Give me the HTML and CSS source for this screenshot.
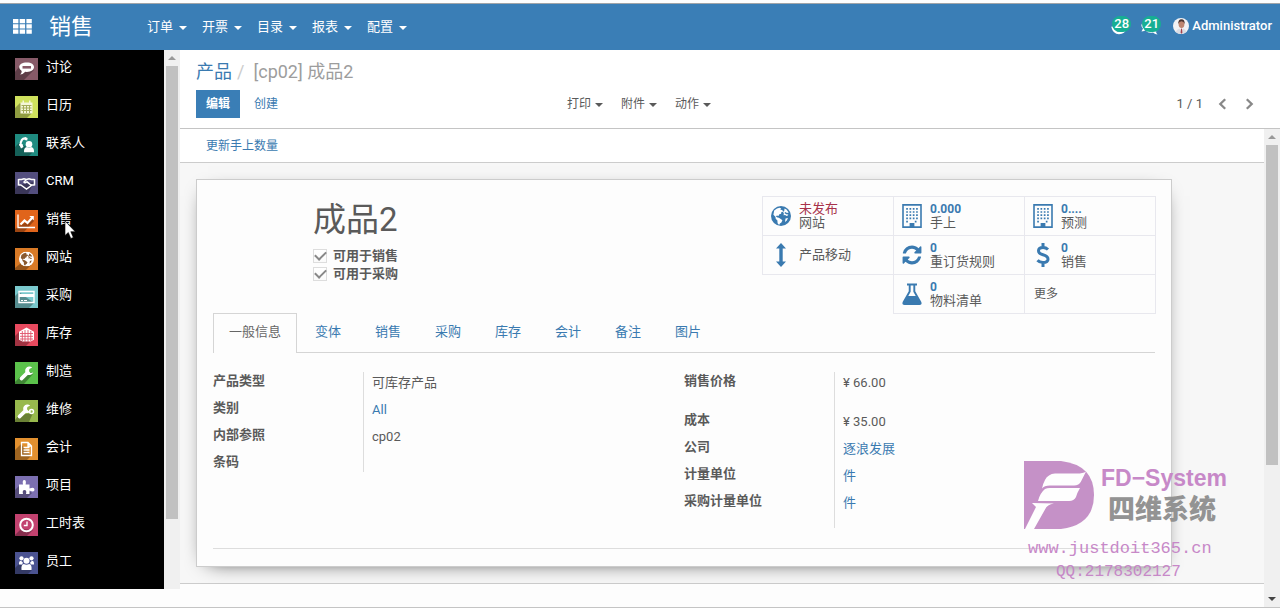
FILE: index.html
```html
<!DOCTYPE html>
<html lang="zh-CN">
<head>
<meta charset="utf-8">
<title>销售 - 成品2</title>
<link rel="stylesheet" href="styles.css">
</head>
<body>
<svg class="defs" aria-hidden="true">
  <defs>
    <symbol id="globe" viewBox="0 0 20 20">
      <circle cx="10" cy="10" r="10" fill="currentColor"/>
      <path class="cut" d="M3.2 4.6 6 2.500l2.600-.7 1.600.8-.9 1.200 1.900.3 1.100 1.600-1.900.4-.3 1.600-1.700.5-1 1.700-1.500-.3-1 .9 1.600.9 1.400.3 2.200 1.600 1.300.9-1 2.300-1.500 1-.8 1.600-1.500-1.900-.2-2.800-1.700-1.700-.3-1.900-2-2.100zM13.500 2.600l2 1 2.200 2.800-1.700.5-1.600-.9-1 1 1.900 1.200 2 .3-.5 1-1.200.6-1.500-1-1.600.2.400-1.500-.8-1.800 1.200-1.200zM14.500 12.500l2.500-.5-1.200 2.500-1.800 1.500z"/>
    </symbol>
    <symbol id="building" viewBox="0 0 20 24">
      <path fill="none" stroke="currentColor" stroke-width="1.6" d="M1 .9h18v22.2H1z"/>
      <path fill="none" stroke="currentColor" stroke-width="1.7" stroke-dasharray="1.7 1.6" d="M4.200 4.800h12.400M4.200 8h12.400M4.200 11.200h12.400M4.200 14.400h12.400M4.200 17.600h3M12.800 17.600h3"/>
      <path fill="currentColor" d="M7.600 19h4.800v4.600H7.600z"/>
    </symbol>
    <symbol id="wrench" viewBox="0 0 23 22">
      <path d="M6.400 16.600l6.400-6.200" fill="none" stroke="#fff" stroke-width="3.600" stroke-linecap="round"/>
      <path d="M17.200 5.400a4.300 4.300 0 1 0 1.100 5.200l-2.900.3-1.500-1.500.5-2.300z" fill="#fff"/>
    </symbol>
  </defs>
</svg>

<header class="navbar">
  <button class="apps" aria-label="应用">
    <svg width="19" height="15" viewBox="0 0 19 15"><path fill="#fff" d="M0 0h5.400v4.200H0zM6.700 0h5.400v4.200H6.700zM13.400 0h5.400v4.200h-5.400zM0 5.300h5.400v4.200H0zM6.700 5.300h5.400v4.200H6.700zM13.400 5.300h5.400v4.200h-5.400zM0 10.600h5.400v4.200H0zM6.700 10.600h5.400v4.200H6.700zM13.400 10.600h5.400v4.200h-5.400z"/></svg>
  </button>
  <a class="brand" href="#">销售</a>
  <nav class="menu">
    <button class="caret">订单</button>
    <button class="caret">开票</button>
    <button class="caret">目录</button>
    <button class="caret">报表</button>
    <button class="caret">配置</button>
  </nav>
  <div class="systray">
    <button class="tray" aria-label="活动">
      <svg width="18" height="18" viewBox="0 0 18 18"><path d="M1.500 9.500Q3 16 8 16T14.500 11" fill="none" stroke="#fff" stroke-width="2.600"/></svg>
      <span class="badge">28</span>
    </button>
    <button class="tray" aria-label="消息">
      <svg width="18" height="18" viewBox="0 0 18 18"><path fill="#fff" d="M1.500 6Q-1 9 2 11.500L.5 14.500Q3.500 14.500 5 12.800L8 13.500Q3 11 1.500 6zM5 14.500Q9 16.500 12 15.500 14 17.500 16.500 17.500 15 16 15 14.800L17 12 13 13z"/></svg>
      <span class="badge">21</span>
    </button>
    <button class="user">
      <svg width="16" height="16" viewBox="0 0 16 16"><circle cx="8" cy="8" r="8" fill="#f2f2f4"/><path d="M2.500 14Q4 11 6.500 10.500L8 13.500 10 10.500Q12.500 11 13.500 14 8 18 2.500 14z" fill="#d9dce4"/><ellipse cx="8.500" cy="6" rx="2.900" ry="4.100" fill="#bd8570"/><path d="M5.300 6Q5 1.300 8.500 1.200 12 1.300 11.600 6 11 3.500 8.500 3.300 6 3.500 5.300 6z" fill="#4a3531"/><path d="M8 10.500l1 .2.400 4-.9 1-.9-1z" fill="#a33f49"/></svg>
      <span>Administrator</span>
    </button>
  </div>
</header>

<div class="workspace">
  <aside class="side">
    <nav class="applist">
      <a class="app" href="#"><svg class="ic" style="background:#875a68" viewBox="0 0 23 22"><path class="sh" d="M4 9l15 3L9 22H0V14z"/><path fill="#fff" d="M11.800 4.500c4.500 0 7.200 2 7.200 4.600s-2.700 4.800-7.200 4.800l-1.500-.1Q8 16.500 5.200 16.600 6.800 15 6.700 13 4.200 11.500 4.200 9.200c0-2.800 3-4.700 7.600-4.700z"/><path d="M7.500 8h8.500v2.600H7.500z" fill="#875a68"/></svg><span>讨论</span></a>
      <a class="app" href="#"><svg class="ic" style="background:#cfe15d" viewBox="0 0 23 22"><path class="sh" d="M5 7l12 10-5 5H0V12z"/><path fill="#f4f6d8" d="M5.500 6.500h12v11h-12zM7.500 4.500h1.500v2H7.500zM14 4.500h1.500v2H14z"/><path d="M6.500 9.500h10M6.500 12h10M6.500 14.500h10M8.500 9v8M11.500 9v8M14.500 9v8" stroke="#a4ad5c"/></svg><span>日历</span></a>
      <a class="app" href="#"><svg class="ic" style="background:#1f8b80" viewBox="0 0 23 22"><path class="sh" d="M4 9l15 8-5 5H0V13z"/><path d="M11 4.500Q5.500 3.500 5.500 12" fill="none" stroke="#fff" stroke-width="2.200"/><path fill="#fff" d="M4 10h3.500l1 3-2.500 1.500zM10 3l2.600 1-.4 2.500L9.500 6z"/><circle cx="14" cy="10.200" r="3.300" fill="#fff"/><path d="M9 18.200q-.3-5 3-5.200 2 1.500 4 0 3.300.2 3 5.200z" fill="#fff"/></svg><span>联系人</span></a>
      <a class="app" href="#"><svg class="ic" style="background:#534e7e" viewBox="0 0 23 22"><path class="sh" d="M4 13l15-3-6 12H0V17z"/><path d="M3.500 7.500h3L9 6.800l2.500.6L14 6.800l2.500.7h3M3.500 13h2.300l5.700 4 5.600-4h2.400M3.500 7v6.500M19.500 7v6.500M11.500 7.500L9 10q1 1.500 3-.2l4.500 3.700" fill="none" stroke="#fff" stroke-width="1.500"/></svg><span>CRM</span></a>
      <a class="app" href="#"><svg class="ic" style="background:#e0641b" viewBox="0 0 23 22"><path class="sh" d="M6 15l13-7v3L9 22H0v-3z"/><path d="M3 4.500v13h17" fill="none" stroke="#fff" stroke-width="1.300"/><path d="M5.500 14.500l4-4 3 2.500 4.500-5" fill="none" stroke="#fff" stroke-width="2.200"/><path d="M14.300 6h4.500v4.500z" fill="#fff"/></svg><span>销售</span></a>
      <a class="app site" href="#"><svg class="ic" style="background:#d97a26" viewBox="0 0 23 22"><path class="sh" d="M6 15l11 1-6 6H0v-2z"/><svg x="4" y="3.500" width="15" height="15" color="#fff"><use href="#globe"/></svg></svg><span>网站</span></a>
      <a class="app" href="#"><svg class="ic" style="background:#7ac9cd" viewBox="0 0 23 22"><path class="sh" d="M4 6l15 11-5 5H0V10z"/><path d="M4 5.500h15v11H4z" fill="none" stroke="#fff" stroke-width="1.400"/><path d="M4 8h15v3H4z" fill="#fff"/><path d="M6 14.500h2M9 14.500h3" stroke="#fff"/></svg><span>采购</span></a>
      <a class="app" href="#"><svg class="ic" style="background:#e84a5f" viewBox="0 0 23 22"><path class="sh" d="M4 8l11 10-4 4H0V12z"/><path d="M11.500 3.500L19 7.800v8l-3.500 1.700h-8L4 15.800v-8z" fill="#fff"/><path d="M7.300 7v10M10 6v12M13 6v12M15.800 7v10M5 9.500h13M5 12.300h13M5 15h13" stroke="#e0526a" stroke-width=".9"/></svg><span>库存</span></a>
      <a class="app" href="#"><svg class="ic" style="background:#5bc24b" viewBox="0 0 23 22"><path class="sh" d="M5 15l12-5 1 2-9 10H0v-2z"/><use href="#wrench"/></svg><span>制造</span></a>
      <a class="app" href="#"><svg class="ic" style="background:#98b94d" viewBox="0 0 23 22"><path class="sh" d="M4 15l14-2-4 9H0v-2z"/><svg x="-2" y="0" width="23" height="22"><use href="#wrench"/></svg><circle cx="16.500" cy="11.500" r="2" fill="none" stroke="#fff" stroke-width="1.500"/></svg><span>维修</span></a>
      <a class="app" href="#"><svg class="ic" style="background:#e2902f" viewBox="0 0 23 22"><path class="sh" d="M6 6l10 12-4 4H0V12z"/><path d="M6.500 4.500h6.500l3.500 3.500v9.500h-10zM13 4.500V8h3.500M8.500 9.500h6M8.500 12h6M8.500 14.500h6" fill="none" stroke="#fff" stroke-width="1.300"/></svg><span>会计</span></a>
      <a class="app" href="#"><svg class="ic" style="background:#7b6fb0" viewBox="0 0 23 22"><path class="sh" d="M5 9l12 8-5 5H0v-8z"/><path fill="#fff" d="M4 8.500h4Q7 4 9.300 4T10.600 8.500H14.500v4Q19.500 10.500 19.500 13.700T14.500 14.500V18H11q1-4-1.500-4T8 18H4z"/></svg><span>项目</span></a>
      <a class="app" href="#"><svg class="ic" style="background:#c2426f" viewBox="0 0 23 22"><path class="sh" d="M6 15l12 1-6 6H0v-1z"/><circle cx="11.500" cy="11" r="6.300" fill="none" stroke="#fff" stroke-width="2"/><path d="M12 7.500v4H8.800" fill="none" stroke="#fff" stroke-width="1.400"/></svg><span>工时表</span></a>
      <a class="app" href="#"><svg class="ic" style="background:#4b5391" viewBox="0 0 23 22"><path class="sh" d="M4 12l13 6-4 4H0v-6z"/><g fill="#fff"><circle cx="6.500" cy="6.300" r="2.100"/><circle cx="16.500" cy="6.300" r="2.100"/><circle cx="11.500" cy="8.700" r="3"/><path d="M4 12.500q-.3-3.500 2-3.700l2 2-1 1.700zM19 12.500q.3-3.500-2-3.700l-2 2 1 1.700zM6.500 18q-.6-5.500 2.300-6 2.700 1.500 5.400 0 2.900.5 2.300 6z"/></g></svg><span>员工</span></a>
    </nav>
    <div class="bar side-bar"><i class="up"></i><i class="thumb side-thumb"></i></div>
    <svg class="cursor" width="13" height="20" viewBox="0 0 13 20"><path d="M1 1v14.500l3.300-3 2.500 6 2.500-1.100-2.500-5.700h4.500z" fill="#fff" stroke="#000" stroke-width=".6"/></svg>
  </aside>

  <main class="main">
    <section class="control">
      <div class="crumbs"><a href="#">产品</a><span class="sep">/</span><span>[cp02] 成品2</span></div>
      <div class="actions">
        <div class="left"><button class="primary">编辑</button><button class="link">创建</button></div>
        <div class="mid"><button class="caret">打印</button><button class="caret">附件</button><button class="caret">动作</button></div>
        <div class="pager"><span>1 / 1</span>
          <button aria-label="上一个"><svg width="9" height="12" viewBox="0 0 9 12"><path d="M7.200 1.200L2.300 6l4.900 4.800" fill="none" stroke="#888" stroke-width="2.300"/></svg></button>
          <button aria-label="下一个"><svg width="9" height="12" viewBox="0 0 9 12"><path d="M1.800 1.200L6.700 6l-4.900 4.800" fill="none" stroke="#888" stroke-width="2.300"/></svg></button>
        </div>
      </div>
    </section>
    <div class="view">
      <div class="form">
        <div class="status"><button class="link">更新手上数量</button></div>
        <div class="sheet-bg">
          <article class="sheet">
            <div class="top">
              <div class="title">
                <h1>成品2</h1>
                <label class="check"><input type="checkbox" checked><span>可用于销售</span></label>
                <label class="check"><input type="checkbox" checked><span>可用于采购</span></label>
              </div>
              <div class="stats">
                <button class="stat"><svg class="si" viewBox="0 0 22 24"><svg x="1" y="2" width="20" height="20"><use href="#globe"/></svg></svg><span class="st"><em class="red">未发布</em><span>网站</span></span></button>
                <button class="stat"><svg class="si" viewBox="0 0 22 24"><svg x="1" y="0" width="20" height="24"><use href="#building"/></svg></svg><span class="st"><b>0.000</b><span>手上</span></span></button>
                <button class="stat"><svg class="si" viewBox="0 0 22 24"><svg x="1" y="0" width="20" height="24"><use href="#building"/></svg></svg><span class="st"><b>0....</b><span>预测</span></span></button>
                <button class="stat"><svg class="si" viewBox="0 0 22 24"><path fill="currentColor" d="M11 0l5 5.500h-3.300v13H16L11 24l-5-5.500h3.300v-13H6z"/></svg><span class="st"><span>产品移动</span></span></button>
                <button class="stat"><svg class="si" viewBox="0 0 1792 1792"><path fill="currentColor" d="M1639 1056q0 5-1 7-64 268-268 434.500t-478 166.500q-146 0-282.500-55t-243.500-157l-129 129q-19 19-45 19t-45-19-19-45v-448q0-26 19-45t45-19h448q26 0 45 19t19 45-19 45l-137 137q71 66 161 102t187 36q134 0 250-65t186-179q11-17 53-117 8-23 30-23h192q13 0 22.500 9.500t9.500 22.500zm25-800v448q0 26-19 45t-45 19h-448q-26 0-45-19t-19-45 19-45l138-138q-148-137-349-137-134 0-250 65t-186 179q-11 17-53 117-8 23-30 23h-199q-13 0-22.500-9.500t-9.500-22.500v-7q65-268 270-434.500t480-166.500q146 0 284 55.500t245 156.500l130-129q19-19 45-19t45 19 19 45z"/></svg><span class="st"><b>0</b><span>重订货规则</span></span></button>
                <button class="stat"><svg class="si" viewBox="0 0 22 24"><path fill="none" stroke="currentColor" stroke-width="3" d="M16 6.500Q14 4.500 11 4.500 6.500 4.500 6.500 7.700 6.500 10.500 11 11.700 16 13 16 16.200 16 19.500 11 19.500 7.500 19.500 5.500 17.200M11 0v5M11 19v5"/></svg><span class="st"><b>0</b><span>销售</span></span></button>
                <button class="stat bom"><svg class="si" viewBox="0 0 22 24"><path fill="none" stroke="currentColor" stroke-width="1.900" d="M6 2.500h10M8.700 2.500v7L2.500 20.500q-.6 1.500 1 1.500h15q1.600 0 1-1.500L13.300 9.500v-7"/><path fill="currentColor" d="M6.500 14h9l4.500 8H2z"/></svg><span class="st"><b>0</b><span>物料清单</span></span></button>
                <button class="stat more">更多</button>
              </div>
            </div>
            <nav class="tabs">
              <a class="active" href="#">一般信息</a><a href="#">变体</a><a href="#">销售</a><a href="#">采购</a><a href="#">库存</a><a href="#">会计</a><a href="#">备注</a><a href="#">图片</a>
            </nav>
            <div class="groups">
              <dl class="group">
                <dt>产品类型</dt><dd>可库存产品</dd>
                <dt>类别</dt><dd><a href="#">All</a></dd>
                <dt>内部参照</dt><dd>cp02</dd>
                <dt class="short">条码</dt><dd class="short"></dd>
              </dl>
              <dl class="group">
                <dt class="tall">销售价格</dt><dd class="tall">¥ 66.00</dd>
                <dt>成本</dt><dd>¥ 35.00</dd>
                <dt>公司</dt><dd><a href="#">逐浪发展</a></dd>
                <dt>计量单位</dt><dd><a href="#">件</a></dd>
                <dt class="last">采购计量单位</dt><dd class="last"><a href="#">件</a></dd>
              </dl>
            </div>
            <hr>
          </article>
        </div>
        <div class="chatter"></div>
      </div>
      <div class="bar"><i class="up"></i><i class="thumb main-thumb"></i><i class="down"></i></div>
    </div>
  </main>
</div>

<div class="watermark">
  <div class="logo">
    <svg width="70" height="68" viewBox="0 0 70 68"><path fill="#c38cc5" d="M0 0h37q33 4 33 34T37 68H0z"/><path fill="#fff" d="M21 19q3-6 10-6.500h22q6 0 9-2-3 6-5 10-2 4-7 4H26q-6 0-8 3 1-5 3-8.500zM21 28q2-1 5-1h30q-3 5-4 9-2 4-7 4H14q2-8 7-12zM8 42l22 .5q-7 1-9 6L10 68H1l11-22z"/></svg>
    <div class="names"><strong>FD−System</strong><b>四维系统</b></div>
  </div>
  <span class="url">www.justdoit365.cn</span>
  <span class="qq">QQ:2178302127</span>
</div>
</body>
</html>
```
FILE: styles.css
```css
* { box-sizing: border-box; }
body {
  margin: 0;
  height: 100vh;
  display: flex;
  flex-direction: column;
  overflow: hidden;
  position: relative;
  background: #fdfdfd;
  border-bottom: 1px solid #c4c4c4;
  color: #5a5a5a;
  font: 13px/18px Roboto, "Noto Sans CJK SC", sans-serif;
}
button { font: inherit; color: inherit; background: none; border: 0; padding: 0; text-align: left; white-space: nowrap; }
a { color: #3a7ab0; text-decoration: none; }
.defs { position: absolute; width: 0; height: 0; }

.navbar {
  display: flex;
  align-items: center;
  flex: none;
  height: 50px;
  padding: 0 8px 0 13px;
  background: #3a7eb6;
  border-top: 3px solid #fdfdfd;
  box-shadow: inset 0 1px #a0a4a8;
  color: #fff;
}
.apps { display: flex; }
.brand { margin: 0 54px 0 17px; color: #fff; font-size: 22px; line-height: 30px; }
.menu { display: flex; gap: 15px; }
.caret { display: flex; align-items: center; gap: 6px; }
.caret::after { content: ""; margin-top: 2px; border: 4px solid transparent; border-top-color: currentColor; border-bottom: 0; }
.systray { display: flex; align-items: center; gap: 12px; margin-left: auto; padding-bottom: 2px; font-weight: 500; }
.tray { position: relative; width: 18px; height: 18px; }
.tray svg { display: block; }
.badge {
  position: absolute;
  left: 1px;
  top: -1px;
  padding: 0 2px;
  border-radius: 9px;
  background: #17ae93;
  font-size: 13px;
  line-height: 16px;
}
.user { display: flex; align-items: center; gap: 3px; margin-left: 2px; }

.workspace { display: flex; flex: 1; min-height: 0; }
.side { position: relative; display: flex; width: 180px; flex: none; margin-bottom: 18px; }
.applist { flex: 1; padding-top: 8px; background: #000; overflow: hidden; }
.app { display: flex; height: 38px; gap: 8px; padding-left: 15px; color: #fff; line-height: 18px; }
.ic { width: 23px; height: 22px; flex: none; }
.sh { fill: #000; opacity: .3; }
.cut { fill: var(--land, #fff); }
.site { --land: #8a5a30; }
.cursor { position: absolute; left: 64px; top: 170px; }

.bar { display: flex; flex-direction: column; align-items: center; width: 16px; flex: none; background: #f0f0f0; }
.up, .down { margin: 6px 0; border: 4px solid transparent; }
.up { border-top: 0; border-bottom-color: #999; }
.down { margin-top: auto; border-bottom: 0; border-top-color: #444; }
.thumb { width: 12px; background: #c1c1c1; }
.side-thumb { height: 84%; }
.main-thumb { height: 67%; }

.main { display: flex; flex-direction: column; flex: 1; min-width: 0; }
.control { flex: none; padding: 10px 16px; height: 79px; background: #fff; border-bottom: 1px solid #c4c4c4; }
.crumbs { font-size: 18px; line-height: 24px; color: #9d9d9d; }
.sep { margin: 0 9px 0 5px; color: #ccc; }
.actions { display: grid; grid-template-columns: 371px 1fr auto; align-items: center; margin-top: 6px; font-size: 12px; }
.left { display: flex; align-items: center; gap: 14px; }
.mid { display: flex; gap: 18px; }
.mid .caret { gap: 4px; }
.primary { padding: 5px 10px; background: #3a7eb6; color: #fff; font-weight: 700; }
.link { color: #3a7ab0; font-size: 12px; }
.pager { display: flex; align-items: center; gap: 18px; padding-right: 10px; font-size: 13px; }
.pager span { margin-right: -3px; }
.pager button { display: flex; }

.view { display: flex; flex: 1; min-height: 0; }
.form { flex: 1; min-width: 0; overflow: hidden; }
.status { height: 34px; padding: 8px 26px; background: #fff; border-bottom: 1px solid #ccc; }
.sheet-bg { padding: 16px 16px; background: #f7f7f7; border-bottom: 1px solid #ccc; }
.sheet {
  max-width: 976px;
  padding: 16px 16px 17px;
  background: #fdfdfd;
  border: 1px solid #ccc;
  box-shadow: 0 5px 20px -12px #000;
}
.top { display: flex; justify-content: space-between; height: 117px; }
.title { padding-left: 100px; }
h1 { margin: 0 0 3px; font-size: 33px; line-height: 48px; font-weight: 400; }
.check { display: flex; align-items: center; gap: 6px; font-weight: 700; }
.check input {
  appearance: none;
  width: 14px;
  height: 14px;
  margin: 0;
  border: 1px solid #ddd;
  background: linear-gradient(#fff, #fafafa);
  display: grid;
  place-items: center;
}
.check input:checked::before { content: ""; width: 9px; height: 5px; margin-top: -3px; border: solid #888; border-width: 0 0 2px 2px; transform: rotate(-45deg); }

.stats { display: grid; grid-template-columns: repeat(3, 131px); grid-auto-rows: 39px; height: 118px; }
.stat { display: flex; align-items: center; gap: 7px; padding-left: 7px; border: 1px solid #e8e8ee; margin: 0 -1px -1px 0; }
.si { width: 22px; height: 24px; flex: none; color: #3a7ab0; }
.st { display: flex; flex-direction: column; line-height: 14px; }
.st b { color: #3a7ab0; font-size: 12px; }
.red { color: #a8324a; font-style: normal; }
.bom { grid-column: 2; }
.more { padding-left: 9px; font-size: 12px; }

.tabs { display: flex; gap: 2px; border-bottom: 1px solid #d5d5d5; }
.tabs a { padding: 9px 15px 11px; border: 1px solid transparent; border-bottom: 0; line-height: 18px; }
.tabs .active { margin-bottom: -1px; padding-bottom: 12px; color: #666; border-color: #d5d5d5; background: #fdfdfd; }
.groups { display: grid; grid-template-columns: 1fr 1fr; align-items: start; padding-top: 19px; }
.group { display: grid; grid-template-columns: 150px 1fr; grid-auto-rows: minmax(19px, auto); margin: 0; }
dt, dd { height: 27px; margin: 0; }
dt { font-weight: 700; }
dd { padding: 2px 8px 0; border-left: 1px solid #ddd; }
.tall { height: 39px; }
.short { height: 19px; }
.last { height: 36px; }
hr { margin: 20px 0 0; border: 0; border-top: 1px solid #ddd; }
.chatter { height: 40px; background: #fdfdfd; }

.watermark { position: absolute; right: 52px; bottom: 23px; width: 204px; color: #c583c6; pointer-events: none; opacity: .95; }
.logo { display: flex; gap: 7px; }
.logo svg { flex: none; }
.names { display: flex; flex-direction: column; font-family: "Liberation Sans", "Noto Sans CJK SC", sans-serif; }
.names strong { padding-top: 3px; font-size: 23px; line-height: 28px; }
.names b { padding-left: 7px; font-size: 27px; line-height: 36px; font-weight: 900; color: #8e8e8e; }
.url, .qq { display: block; font-family: "Liberation Mono", monospace; }
.url { padding: 9px 0 0 4px; font-size: 17px; line-height: 22px; }
.qq { padding-left: 32px; font-size: 16px; line-height: 24px; }
```
